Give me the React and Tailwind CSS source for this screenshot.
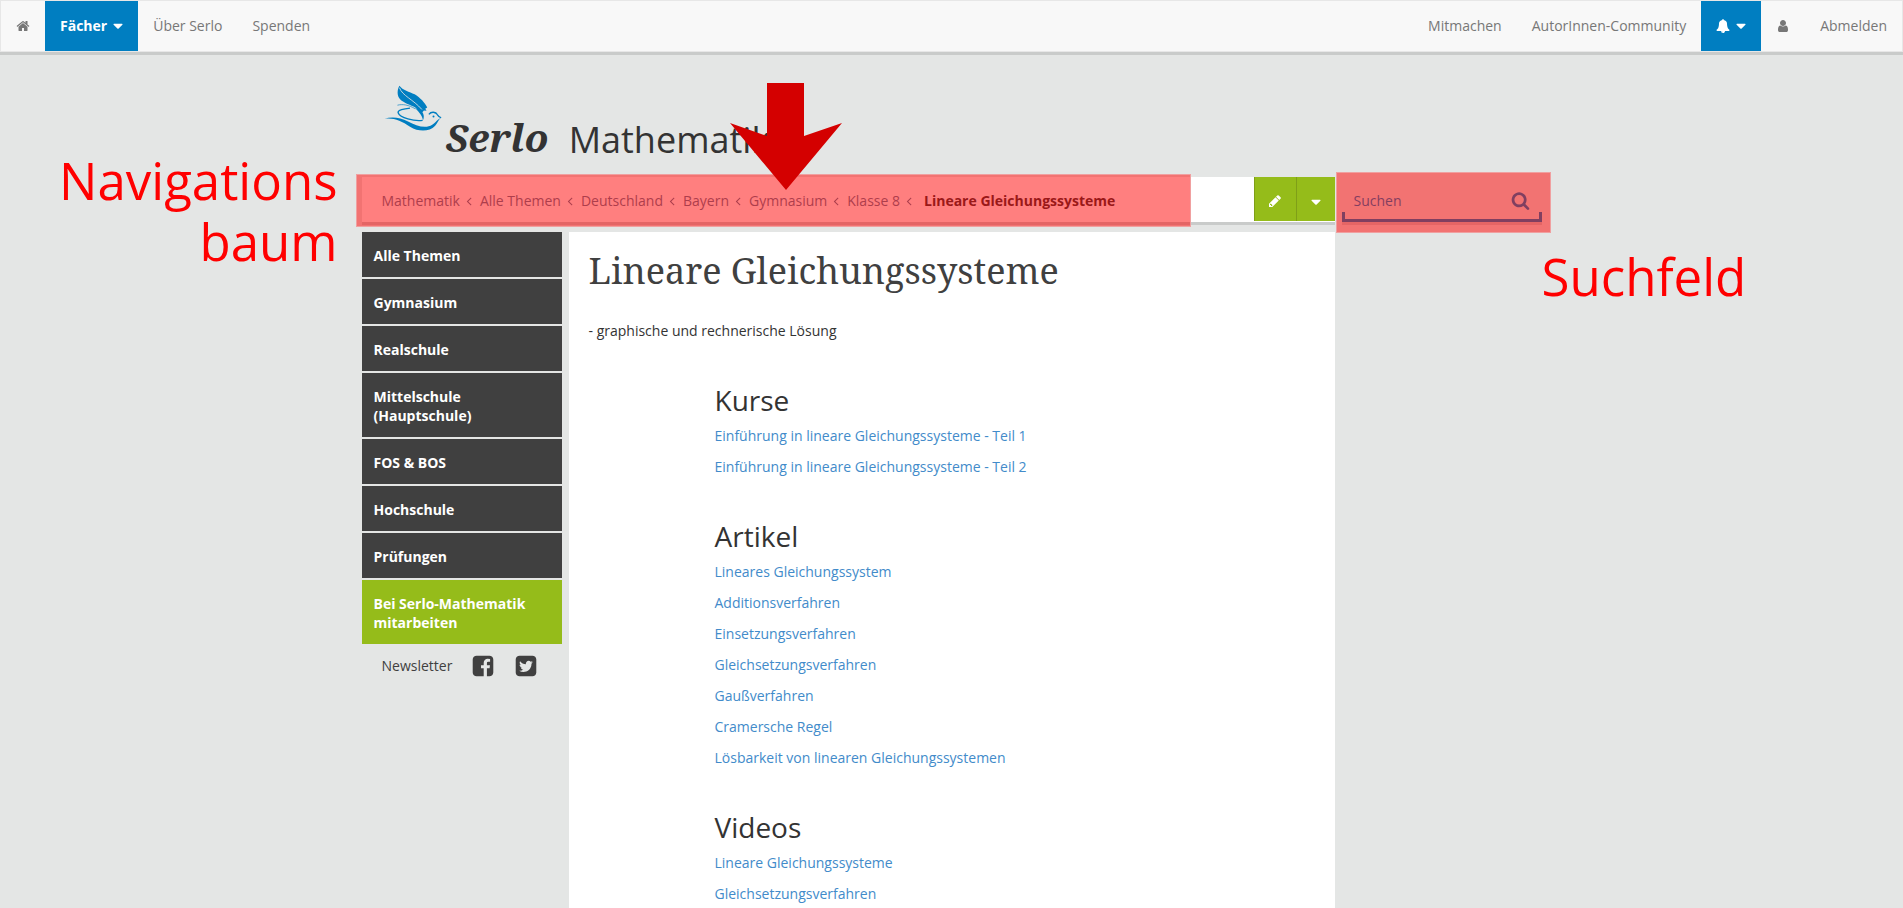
import React, { useState } from "react";

const ICONS = {
  home: "M1472 992v480q0 26-19 45t-45 19h-384v-384h-256v384h-384q-26 0-45-19t-19-45v-480q0-1 .5-3t.5-3l575-474 575 474q1 2 1 6zm223-69l-62 74q-8 9-21 11h-3q-13 0-21-7l-692-577-692 577q-12 8-24 7-13-2-21-11l-62-74q-8-10-7-23.5t11-21.5l719-599q32-26 76-26t76 26l244 204v-195q0-14 9-23t23-9h192q14 0 23 9t9 23v408l219 182q10 8 11 21.5t-7 23.5z",
  user: "M1536 1399q0 109-62.5 187t-150.5 78h-854q-88 0-150.5-78t-62.5-187q0-85 8.5-160.5t31.5-152 58.5-131 94-89 134.5-34.5q131 128 313 128t313-128q76 0 134.5 34.5t94 89 58.5 131 31.5 152 8.5 160.5zm-256-887q0 159-112.5 271.5t-271.5 112.5-271.5-112.5-112.5-271.5 112.5-271.5 271.5-112.5 271.5 112.5 112.5 271.5z",
  bell: "M912 1696q0-16-16-16-59 0-101.5-42.5t-42.5-101.5q0-16-16-16t-16 16q0 73 51.5 124.5t124.5 51.5q16 0 16-16zm816-288q0 52-38 90t-90 38h-448q0 106-75 181t-181 75-181-75-75-181h-448q-52 0-90-38t-38-90q50-42 91-88t85-119.5 74.5-158.5 50-206 19.5-260q0-152 117-282.5t307-158.5q-8-19-8-39 0-40 28-68t68-28 68 28 28 68q0 20-8 39 190 28 307 158.5t117 282.5q0 139 19.5 260t50 206 74.5 158.5 85 119.5 91 88z",
  caret: "M1408 704q0 26-19 45l-448 448q-19 19-45 19t-45-19l-448-448q-19-19-19-45t19-45 45-19h896q26 0 45 19t19 45z",
  search: "M1216 832q0-185-131.5-316.5t-316.5-131.5-316.5 131.5-131.5 316.5 131.5 316.5 316.5 131.5 316.5-131.5 131.5-316.5zm512 832q0 52-38 90t-90 38q-54 0-90-38l-343-342q-179 124-399 124-143 0-273.5-55.5t-225-150-150-225-55.5-273.5 55.5-273.5 150-225 225-150 273.5-55.5 273.5 55.5 225 150 150 225 55.5 273.5q0 220-124 399l343 343q37 37 37 90z",
  pencil: "M491 1536l91-91-235-235-91 91v107h128v128h107zm469-1120l416 416-832 832h-416v-416zm683 96q0 53-37 90l-166 166-416-416 166-165q36-38 90-38 53 0 91 38l235 234q37 39 37 91z",
  facebook: "M1376 128q119 0 203.5 84.5t84.5 203.5v960q0 119-84.5 203.5t-203.5 84.5h-188v-595h199l30-232h-229v-148q0-56 23.5-84t91.5-28l122-1v-207q-63-9-178-9-136 0-217.5 80t-81.5 226v171h-200v232h200v595h-532q-119 0-203.5-84.5t-84.5-203.5v-960q0-119 84.5-203.5t203.5-84.5h960z",
  twitter: "M1408 610q-56 25-121 34 68-40 93-117-65 38-134 51-61-66-153-66-87 0-148.5 61.5t-61.5 148.5q0 29 5 48-129-7-242-65t-192-155q-29 50-29 106 0 114 91 175-47-1-100-26v2q0 75 50 133.5t123 72.5q-29 8-51 8-13 0-39-4 21 63 74.5 104t121.5 42q-116 90-261 90-26 0-50-3 148 94 322 94 112 0 210-35.5t168-95 120.5-137 75-162 24.5-168.5q0-18-1-27 63-45 105-109zm256-194v960q0 119-84.5 203.5t-203.5 84.5h-960q-119 0-203.5-84.5t-84.5-203.5v-960q0-119 84.5-203.5t203.5-84.5h960q119 0 203.5 84.5t84.5 203.5z",
  angle: "M1203 544q0 13-10 23l-393 393 393 393q10 10 10 23t-10 23l-50 50q-10 10-23 10t-23-10l-466-466q-10-10-10-23t10-23l466-466q10-10 23-10t23 10l50 50q10 10 10 23z",
};

const BREADCRUMBS = ["Mathematik", "Alle Themen", "Deutschland", "Bayern", "Gymnasium", "Klasse 8"];

const TOPICS = [
  "Alle Themen", "Gymnasium", "Realschule", "Mittelschule (Hauptschule)",
  "FOS & BOS", "Hochschule", "Prüfungen",
];

const SECTIONS = [
  {
    title: "Kurse",
    links: [
      "Einführung in lineare Gleichungssysteme - Teil 1",
      "Einführung in lineare Gleichungssysteme - Teil 2",
    ],
  },
  {
    title: "Artikel",
    links: [
      "Lineares Gleichungssystem", "Additionsverfahren", "Einsetzungsverfahren",
      "Gleichsetzungsverfahren", "Gaußverfahren", "Cramersche Regel",
      "Lösbarkeit von linearen Gleichungssystemen",
    ],
  },
  { title: "Videos", links: ["Lineare Gleichungssysteme", "Gleichsetzungsverfahren"] },
];

function Icon({ name, size = 14, className }) {
  return (
    <svg viewBox="0 0 1792 1792" width={size} height={size} fill="currentColor" className={className} aria-hidden="true">
      <path d={ICONS[name]} />
    </svg>
  );
}

function NavLink({ children, label }) {
  return (
    <a href="#" aria-label={label} className="flex items-center px-[15px] text-[#777]">
      {children}
    </a>
  );
}

function NavDropdown({ children, label }) {
  return (
    <button aria-label={label} className="flex items-center gap-[3px] bg-[#007ec1] pr-3 pl-[15px] font-bold text-white">
      {children} <Icon name="caret" size={16} />
    </button>
  );
}

function Navbar() {
  return (
    <nav className="flex h-[52px] justify-between border border-[#e7e7e7] bg-[#f8f8f8] shadow-[0_3px_0_#c9cbca]">
      <div className="flex">
        <NavLink label="Startseite"><Icon name="home" /></NavLink>
        <NavDropdown>Fächer</NavDropdown>
        <NavLink>Über Serlo</NavLink>
        <NavLink>Spenden</NavLink>
      </div>
      <div className="flex">
        <NavLink>Mitmachen</NavLink>
        <NavLink>AutorInnen-Community</NavLink>
        <NavDropdown label="Benachrichtigungen"><Icon name="bell" /></NavDropdown>
        <NavLink label="Profil"><Icon name="user" /></NavLink>
        <NavLink>Abmelden</NavLink>
      </div>
    </nav>
  );
}

function Bird() {
  return (
    <svg viewBox="0 0 174 142" className="h-[47px] w-[58px]" fill="#007ec1" aria-hidden="true">
      <path d="M46 2C39 14 38 32 48 43C60 55 80 60 94 68C102 74 106 80 114 84L120 77L128 78L124 72L130 68C124 54 108 38 92 28C76 20 56 16 46 2Z" />
      <path d="M46 8C54 32 88 44 114 74" fill="none" stroke="#e4e6e5" strokeWidth="2.5" />
      <path d="M92 68L114 80C121 90 121 98 117 107C116 96 108 84 92 68Z" />
      <g fill="none" stroke="#007ec1">
        <path d="M40 61C56 57 74 60 94 72" strokeWidth="2" />
        <path d="M78 70C60 72 40 76 42 84C48 100 90 110 116 107" strokeWidth="4" />
        <path d="M135 89C142 79 156 81 161 90C164 95 168 97 172 99" strokeWidth="4" />
      </g>
      <path d="M0 102C24 94 48 98 72 110C96 122 124 134 145 120C158 112 160 104 172 99C164 104 162 114 154 123C136 142 104 142 78 126C52 108 28 98 0 102Z" />
      <circle cx="149" cy="95" r="3" />
    </svg>
  );
}

function Header() {
  return (
    <header className="flex h-[125px] items-start pt-[33px] pl-[22px]">
      <a href="#" className="flex text-[#333]">
        <Bird />
        <span className="mt-8 pl-1 font-['Droid_Serif','Noto_Serif','DejaVu_Serif',serif] text-[39px] leading-10 font-bold italic">
          Serlo
        </span>
      </a>
      <span className="mt-[35px] pl-5 text-[36px] leading-10 text-[#333]">Mathematik</span>
    </header>
  );
}

function Breadcrumbs() {
  return (
    <ol className="flex items-center pt-[2px] pl-5">
      {BREADCRUMBS.map((name) => (
        <li key={name} className="flex items-center text-[#5a7d99]">
          <a href="#">{name}</a>
          <Icon name="angle" className="mr-1 ml-[2px]" />
        </li>
      ))}
      <li className="pl-1 font-bold text-[#333]">Lineare Gleichungssysteme</li>
    </ol>
  );
}

function Toolbar() {
  const [query, setQuery] = useState("");

  return (
    <div className="flex">
      <div className="relative flex h-12 flex-1 justify-between border-b-3 border-[#c9cbca] bg-white">
        <Breadcrumbs />
        <div className="mb-px flex text-white">
          <button aria-label="Bearbeiten" className="flex w-[42px] items-center justify-center border-l border-[#7f9f18] bg-[#95bc1a] pt-1">
            <Icon name="pencil" />
          </button>
          <button aria-label="Weitere Aktionen" className="flex w-[39px] items-center justify-center border-l border-[#7f9f18] bg-[#95bc1a] pt-[6px]">
            <Icon name="caret" size={16} />
          </button>
        </div>
        <div className="pointer-events-none absolute -top-[3px] -left-[6px] h-[53px] w-[835px] border border-[#f0a0a0] bg-[#ff0000]/50" />
      </div>
      <form className="relative ml-[7px] h-12 w-[200px]" onSubmit={(e) => e.preventDefault()}>
        <div className="flex h-[45px] items-center px-3 pt-[2px] text-[#007ec1]">
          <input
            type="text"
            aria-label="Suchen"
            placeholder="Suchen"
            value={query}
            onChange={(e) => setQuery(e.target.value)}
            className="h-10 min-w-0 flex-1 bg-transparent outline-none placeholder:text-[#007ec1]"
          />
          <button aria-label="Suche starten"><Icon name="search" size={19} /></button>
        </div>
        <div className="pointer-events-none absolute inset-x-0 bottom-[3px] h-[10px] border-3 border-t-0 border-[#007ec1] shadow-[0_3px_0_#c9cbca]" />
        <div className="pointer-events-none absolute -top-[5px] -left-[6px] h-[61px] w-[215px] border border-[#f0a0a0] bg-[#ff0000]/50" />
      </form>
    </div>
  );
}

function Sidebar() {
  return (
    <aside className="w-[200px]">
      <ul className="flex flex-col gap-[2px] leading-[19px] font-bold text-white">
        {TOPICS.map((name) => (
          <li key={name}>
            <a href="#" className="block bg-[#404040] px-3 pt-[14px] pb-3">{name}</a>
          </li>
        ))}
        <li>
          <a href="#" className="block bg-[#95bc1a] px-3 pt-[14px] pb-3">Bei Serlo-Mathematik mitarbeiten</a>
        </li>
      </ul>
      <div className="mt-[10px] flex items-center gap-[19px] pl-5 text-[#404040]">
        <a href="#">Newsletter</a>
        <a href="#" aria-label="Facebook"><Icon name="facebook" size={24} /></a>
        <a href="#" aria-label="Twitter"><Icon name="twitter" size={24} /></a>
      </div>
    </aside>
  );
}

function Content() {
  return (
    <main className="mr-[207px] ml-[7px] flex-1 bg-white px-5 pt-[19px] text-[#333]">
      <h1 className="font-['Droid_Serif','Noto_Serif','DejaVu_Serif',serif] text-[36px] leading-10 text-[#404040]">
        Lineare Gleichungssysteme
      </h1>
      <p className="mt-[30px] leading-5">- graphische und rechnerische Lösung</p>
      <div className="mt-[39px] ml-[126px] flex flex-col gap-[34px]">
        {SECTIONS.map((s) => (
          <section key={s.title}>
            <h2 className="text-[28px] leading-10">{s.title}</h2>
            <ul className="leading-[31px] text-[#428bca]">
              {s.links.map((l) => (
                <li key={l}><a href="#">{l}</a></li>
              ))}
            </ul>
          </section>
        ))}
      </div>
    </main>
  );
}

// Red tutorial labels and the arrow, lying over the page
function Annotations() {
  return (
    <div className="pointer-events-none">
      <p className="absolute top-[98px] right-full mr-6 text-right text-[51px] leading-[61px] text-[#ff0000]">
        Navigations<br />baum
      </p>
      <p className="absolute top-[194px] left-full text-[51px] leading-[61px] text-[#ff0000]">Suchfeld</p>
      <svg viewBox="0 0 112 107" className="absolute top-[31px] left-[368px] h-[107px] w-[112px]" aria-hidden="true">
        <path d="M37 0H74V53L112 40L56 107L0 40L37 53Z" fill="#d40000" />
      </svg>
    </div>
  );
}

export default function App() {
  return (
    <div className="flex min-h-screen flex-col overflow-x-hidden bg-[#e4e6e5] font-['Open_Sans',sans-serif] text-sm">
      <Navbar />
      <div className="relative mx-auto flex w-full max-w-[1180px] flex-1 flex-col">
        <Header />
        <Toolbar />
        <div className="mt-[7px] flex flex-1">
          <Sidebar />
          <Content />
        </div>
        <Annotations />
      </div>
    </div>
  );
}
